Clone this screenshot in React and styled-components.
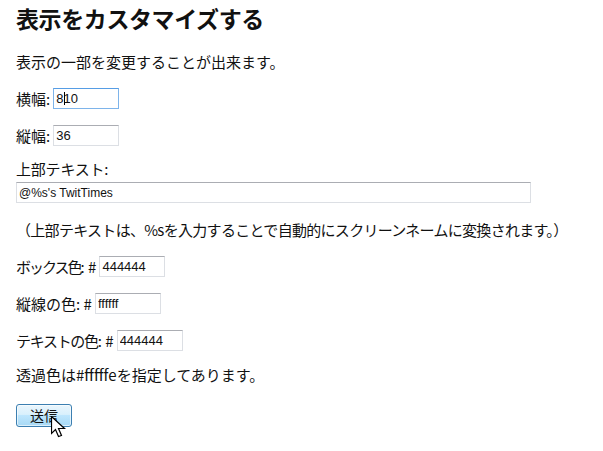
import React from "react";
import styled, { createGlobalStyle } from "styled-components";

const Global = createGlobalStyle`
  html, body { margin: 0; padding: 0; background: #fff; }
  body { font-family: "Noto Sans CJK JP", "Liberation Sans", sans-serif; color: #111; }
`;

const Page = styled.div`
  display: flex;
  flex-direction: column;
  min-height: 451px;
  box-sizing: border-box;
  padding: 5px 16px 0 16px;
`;

const Heading = styled.h2`
  margin: 0 0 18px 0;
  font-size: 23px;
  line-height: 27px;
  font-weight: bold;
  letter-spacing: -0.4px;
  color: #111;
`;

const Row = styled.div`
  display: flex;
  align-items: center;
  height: 22px;
  margin-bottom: ${(p) => p.$mb ?? 15}px;
  font-size: 15px;
  white-space: nowrap;
  letter-spacing: ${(p) => p.$ls ?? 0}px;
`;

const Label = styled.span`
  margin-right: ${(p) => p.$gap ?? 3}px;
  white-space: pre;
`;

const Tight = styled.span`
  letter-spacing: ${(p) => p.$ls ?? 0}px;
`;

const Field = styled.div`
  position: relative;
  display: flex;
`;

const Input = styled.input`
  box-sizing: border-box;
  width: ${(p) => p.$w}px;
  height: ${(p) => p.$h ?? 21}px;
  padding: 0 2px;
  font-family: "Liberation Sans", Arial, sans-serif;
  font-size: ${(p) => p.$fs ?? 13}px;
  color: #111;
  background: #fff;
  border: 1px solid ${(p) => (p.$focus ? "#7eb4ea" : "#dcdfe4")};
  border-top-color: ${(p) => (p.$focus ? "#569de5" : "#abadb3")};
  border-radius: 0;
  outline: none;
`;

const Caret = styled.span`
  position: absolute;
  left: 11px;
  top: 4px;
  width: 1px;
  height: 13px;
  background: #000;
`;

const Block = styled.div`
  display: flex;
  flex-direction: column;
  gap: 5px;
  margin-bottom: 15px;
  font-size: 15px;
`;

const BlockLabel = styled.div`
  height: 17px;
  line-height: 17px;
  letter-spacing: -0.2px;
`;

const ButtonWrap = styled.div`
  position: relative;
  margin-top: 1px;
  align-self: flex-start;
`;

const Button = styled.button`
  box-sizing: border-box;
  width: 56px;
  height: 23px;
  padding: 0;
  font-family: "Noto Sans CJK JP", sans-serif;
  font-size: 14px;
  color: #111;
  border: 1px solid #3c7fb1;
  border-radius: 3px;
  background: linear-gradient(to bottom, #eaf6fd 0%, #d9f0fc 45%, #bee6fd 50%, #a7d9f5 100%);
  box-shadow: inset 0 0 0 1px rgba(255, 255, 255, 0.6);
`;

const Cursor = styled.svg`
  position: absolute;
  left: 35px;
  top: 14px;
  z-index: 2;
  display: block;
`;

export default function App() {
  return (
    <>
      <Global />
      <Page>
        <Heading>表示をカスタマイズする</Heading>
        <Row>表示の一部を変更することが出来ます。</Row>
        <Row>
          <Label>横幅:</Label>
          <Field>
            <Input $w={66} $focus defaultValue="810" />
            <Caret />
          </Field>
        </Row>
        <Row $mb={14}>
          <Label>縦幅:</Label>
          <Input $w={66} defaultValue="36" />
        </Row>
        <Block>
          <BlockLabel>上部テキスト:</BlockLabel>
          <Input $w={515} $h={21} $fs={12} defaultValue="@%s's TwitTimes" />
        </Block>
        <Row $ls={-0.7}>（上部テキストは、%sを入力することで自動的にスクリーンネームに変換されます。）</Row>
        <Row>
          <Label $gap={3}>
            <Tight $ls={-2}>ボックス色</Tight>: #
          </Label>
          <Input $w={66} defaultValue="444444" />
        </Row>
        <Row>
          <Label $gap={3}>
            <Tight>縦線の色</Tight>: #
          </Label>
          <Input $w={66} defaultValue="ffffff" />
        </Row>
        <Row $mb={12}>
          <Label $gap={3}>
            <Tight $ls={-1.3}>テキストの色</Tight>: #
          </Label>
          <Input $w={66} defaultValue="444444" />
        </Row>
        <Row $mb={16}>透過色は#fffffeを指定してあります。</Row>
        <ButtonWrap>
          <Button type="button">送信</Button>
          <Cursor width="15" height="23" viewBox="0 0 15 23">
            <path
              d="M0.5 0.5 L0.5 17.5 L4.5 13.5 L7.5 20.5 L10.5 19.5 L7.5 12.5 L13.5 12.5 Z"
              fill="#ffffff"
              stroke="#000000"
              strokeWidth="1.2"
            />
          </Cursor>
        </ButtonWrap>
      </Page>
    </>
  );
}
